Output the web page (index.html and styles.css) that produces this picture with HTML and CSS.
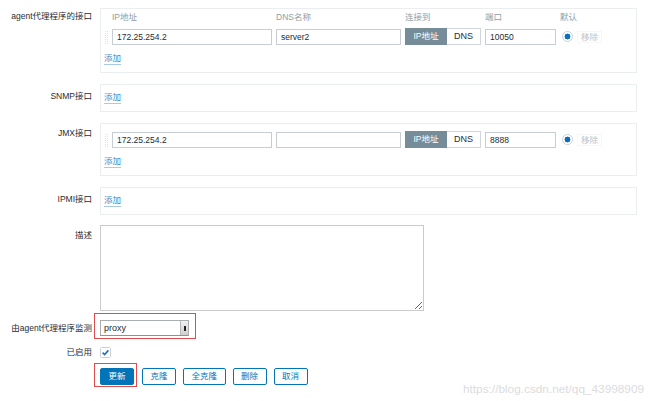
FILE: index.html
```html
<!DOCTYPE html>
<html lang="zh">
<head>
<meta charset="utf-8">
<title>主机</title>
<link rel="stylesheet" href="styles.css">
</head>
<body>
<div class="form">
  <div class="row">
    <div class="label pt2">agent代理程序的接口</div>
    <div class="box has-header">
      <div class="iface-grid">
        <span></span>
        <span class="th">IP地址</span>
        <span class="th">DNS名称</span>
        <span class="th">连接到</span>
        <span class="th">端口</span>
        <span class="th">默认</span>
        <span class="drag"></span>
        <div class="input">172.25.254.2</div>
        <div class="input">server2</div>
        <div class="seg"><span class="seg-on">IP地址</span><span class="seg-off">DNS</span></div>
        <div class="input">10050</div>
        <div class="def"><span class="radio"></span><span class="remove">移除</span></div>
      </div>
      <a class="add">添加</a>
    </div>
  </div>

  <div class="row">
    <div class="label pt6">SNMP接口</div>
    <div class="box"><a class="add">添加</a></div>
  </div>

  <div class="row">
    <div class="label pt4">JMX接口</div>
    <div class="box">
      <div class="iface-grid">
        <span class="drag"></span>
        <div class="input">172.25.254.2</div>
        <div class="input"></div>
        <div class="seg"><span class="seg-on">IP地址</span><span class="seg-off">DNS</span></div>
        <div class="input">8888</div>
        <div class="def"><span class="radio"></span><span class="remove">移除</span></div>
      </div>
      <a class="add">添加</a>
    </div>
  </div>

  <div class="row row-tight">
    <div class="label pt6">IPMI接口</div>
    <div class="box"><a class="add">添加</a></div>
  </div>

  <div class="row row-desc">
    <div class="label pt4">描述</div>
    <textarea class="desc"></textarea>
  </div>

  <div class="row row-select">
    <div class="label pt9">由agent代理程序监测</div>
    <div class="mark mark-select">
      <div class="select"><span class="sel-val">proxy</span><span class="sel-btn"><span class="sel-thumb"></span></span></div>
    </div>
  </div>

  <div class="row row-check">
    <div class="label lh11">已启用</div>
    <span class="check">
      <svg width="11" height="11" viewBox="0 0 11 11"><rect x="0.5" y="0.5" width="10" height="10" rx="1" fill="#fff" stroke="#c9d1d6"/><path d="M2.6 5.6 L4.6 7.5 L8.4 3.4" fill="none" stroke="#1a73c2" stroke-width="1.6"/></svg>
    </span>
  </div>

  <div class="row row-buttons">
    <div></div>
    <div class="buttons">
      <div class="mark mark-btn"><button class="btn btn-main">更新</button></div>
      <button class="btn btn-alt">克隆</button>
      <button class="btn btn-alt">全克隆</button>
      <button class="btn btn-alt">删除</button>
      <button class="btn btn-alt">取消</button>
    </div>
  </div>
</div>
<div class="watermark">https://blog.csdn.net/qq_43998909</div>
</body>
</html>
```
FILE: styles.css
```css
* { box-sizing: border-box; }

body {
  margin: 0;
  width: 650px;
  height: 401px;
  overflow: hidden;
  position: relative;
  background: #fff;
  color: #1f2c33;
  font-family: "Liberation Sans", "Noto Sans CJK SC", sans-serif;
  font-size: 8.5px;
}

.form { padding-top: 8px; }

.row {
  display: grid;
  grid-template-columns: 92px 537px;
  column-gap: 8px;
  align-items: start;
  margin-bottom: 11px;
}
.row-tight { margin-bottom: 10px; }
.row-desc { margin-bottom: 2px; }
.row-select { margin-bottom: 8px; }
.row-check { margin-bottom: 5px; }

.label {
  text-align: right;
  line-height: 12px;
  white-space: nowrap;
  color: #1f2c33;
}
.pt2 { padding-top: 2px; }
.pt4 { padding-top: 4px; }
.pt6 { padding-top: 6px; }
.pt9 { padding-top: 9px; }
.lh11 { line-height: 11px; }

.box {
  border: 1px solid #ebeef0;
  padding: 7px 4px 7px 3px;
}
.box.has-header { padding-top: 2px; }

.iface-grid {
  display: grid;
  grid-template-columns: 4px 160px 125px 76px 71px auto;
  column-gap: 4px;
  row-gap: 5px;
  align-items: center;
}
.th {
  line-height: 12px;
  color: #8d9ea7;
}
.drag {
  width: 4px;
  height: 14px;
  background-image:
    linear-gradient(90deg, #fff 1px, transparent 1px),
    linear-gradient(#fff 1px, transparent 1px);
  background-size: 2px 2px;
  background-color: #dfe3e6;
}
.input {
  height: 16px;
  border: 1px solid #c6ced3;
  padding: 0 4px;
  line-height: 14px;
  background: #fff;
  color: #1f2c33;
}
.seg {
  display: flex;
  height: 17px;
}
.seg-on {
  width: 42px;
  background: #768d99;
  border: 1px solid #768d99;
  color: #fff;
  text-align: center;
  line-height: 15px;
}
.seg-off {
  width: 34px;
  border: 1px solid #cfd7dc;
  border-left: 0;
  color: #1f2c33;
  text-align: center;
  line-height: 15px;
  font-size: 9px;
}
.def {
  display: flex;
  align-items: center;
  gap: 4px;
  padding-left: 2px;
}
.radio {
  width: 11px;
  height: 11px;
  border-radius: 50%;
  border: 1px solid #c6d2da;
  background: radial-gradient(circle, #0c6cbf 2.7px, #fff 3.2px);
}
.remove {
  color: #b9c4ca;
  border: 1px solid #f6f7f8;
  padding: 0 3px;
  line-height: 10px;
}

.add {
  display: inline-block;
  color: #3b8bc9;
  line-height: 11px;
  border-bottom: 1px solid #a9cbe5;
  cursor: pointer;
}
.iface-grid + .add { margin-top: 8px; }

.desc {
  display: block;
  width: 324px;
  height: 86px;
  margin: 0;
  border: 1px solid #cbcbcb;
  background: #fff;
  resize: both;
}

.mark {
  justify-self: start;
  border: 1px solid #e24b4b;
}
.mark-select {
  margin-left: -6px;
  padding: 6px 6px 2px 5px;
}
.select {
  display: flex;
  width: 89px;
  height: 16px;
  border: 1px solid #a9aeb1;
  border-bottom-color: #8c9296;
  background: #fff;
}
.sel-val {
  flex: 1;
  padding-left: 3px;
  line-height: 14px;
  font-size: 9px;
  color: #1f2c33;
}
.sel-btn {
  width: 8px;
  background: linear-gradient(#f0f0f0, #cfcfcf);
  border-left: 1px solid #b8b8b8;
  display: flex;
  align-items: center;
  justify-content: center;
}
.sel-thumb {
  width: 2px;
  height: 5px;
  background: #222;
}

.check {
  display: block;
  width: 11px;
  height: 11px;
  line-height: 0;
}

.buttons {
  display: flex;
  align-items: flex-start;
  gap: 7px;
}
.mark-btn {
  margin-left: -6px;
  margin-right: -2px;
  padding: 4px 2px 1px 5px;
}
.btn {
  height: 17px;
  margin: 0;
  padding: 0 7.5px;
  border-radius: 2px;
  font-family: "Liberation Sans", "Noto Sans CJK SC", sans-serif;
  font-size: 8.5px;
  line-height: 15px;
  cursor: pointer;
}
.btn-main {
  background: #0275b8;
  border: 1px solid #0275b8;
  color: #fff;
}
.btn-alt {
  margin-top: 5px;
  background: #fff;
  border: 1px solid #0275b8;
  color: #0275b8;
}

.watermark {
  position: absolute;
  left: 463px;
  top: 382px;
  font-size: 11.8px;
  color: #dcdcdc;
  white-space: nowrap;
}
```
